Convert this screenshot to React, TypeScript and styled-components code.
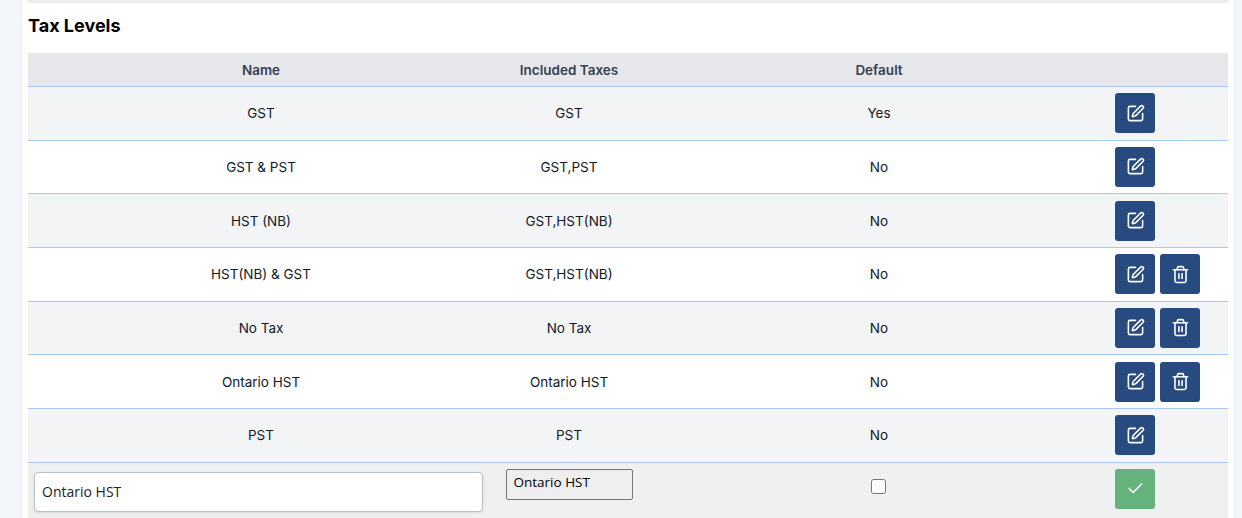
import React from 'react';
import styled, { createGlobalStyle } from 'styled-components';
import { Check, SquarePen, Trash2 } from 'lucide-react';

const rows = [
  { name: 'GST', taxes: 'GST', isDefault: 'Yes', canDelete: false },
  { name: 'GST & PST', taxes: 'GST,PST', isDefault: 'No', canDelete: false },
  { name: 'HST (NB)', taxes: 'GST,HST(NB)', isDefault: 'No', canDelete: false },
  { name: 'HST(NB) & GST', taxes: 'GST,HST(NB)', isDefault: 'No', canDelete: true },
  { name: 'No Tax', taxes: 'No Tax', isDefault: 'No', canDelete: true },
  { name: 'Ontario HST', taxes: 'Ontario HST', isDefault: 'No', canDelete: true },
  { name: 'PST', taxes: 'PST', isDefault: 'No', canDelete: false },
];

const App: React.FC<{}> = () => {
  return (
    <Page>
      <GlobalStyle />
      <Panel>
        <TopStrip />
        <Title>Tax Levels</Title>
        <Table>
          <colgroup>
            <col width="466" />
            <col width="150" />
            <col width="470" />
            <col width="114" />
          </colgroup>
          <thead>
            <tr>
              <HeadCell>Name</HeadCell>
              <HeadCell>Included Taxes</HeadCell>
              <HeadCell>Default</HeadCell>
              <HeadCell />
            </tr>
          </thead>
          <tbody>
            {rows.map((row) => (
              <Row key={row.name}>
                <Cell>{row.name}</Cell>
                <Cell>{row.taxes}</Cell>
                <Cell>{row.isDefault}</Cell>
                <ActionCell>
                  <Actions>
                    <IconButton>
                      <SquarePen size={19} strokeWidth={2} />
                    </IconButton>
                    {row.canDelete && (
                      <IconButton>
                        <Trash2 size={19} strokeWidth={2} />
                      </IconButton>
                    )}
                  </Actions>
                </ActionCell>
              </Row>
            ))}
            <EditRow>
              <NameEditCell>
                <NameInput defaultValue="Ontario HST" />
              </NameEditCell>
              <TaxesEditCell>
                <TaxesSelect>
                  <option>Ontario HST</option>
                </TaxesSelect>
              </TaxesEditCell>
              <DefaultEditCell>
                <DefaultCheckbox type="checkbox" />
              </DefaultEditCell>
              <SaveCell>
                <SaveButton>
                  <Check size={19} strokeWidth={2} />
                </SaveButton>
              </SaveCell>
            </EditRow>
          </tbody>
        </Table>
      </Panel>
    </Page>
  );
};

export default App;

const GlobalStyle = createGlobalStyle`
  html, body {
    margin: 0;
    padding: 0;
    height: 518px;
    overflow: hidden;
    background: #f3f7fb;
  }
`;

const Page = styled.div`
  height: 518px;
  padding: 0 8px 0 22px;
  overflow: hidden;
  font-family: Inter, 'Liberation Sans', sans-serif;
  color: #111827;
`;

const Panel = styled.div`
  background: #fff;
  padding: 0 6px;
  height: 518px;
  box-shadow: 0 0 4px rgba(0, 0, 0, 0.05);
`;

const TopStrip = styled.div`
  height: 3px;
  background: #ececec;
`;

const Title = styled.h2`
  margin: 0;
  height: 50px;
  padding-top: 11px;
  box-sizing: border-box;
  font-size: 18px;
  line-height: 24px;
  font-weight: 700;
  color: #000;
`;

const Table = styled.table`
  width: 1200px;
  table-layout: fixed;
  border-collapse: separate;
  border-spacing: 0;
  font-size: 13.5px;
`;

const HeadCell = styled.th`
  height: 33px;
  padding: 0;
  background: #e5e7eb;
  border-bottom: 1px solid #a9c8f5;
  font-size: 13.5px;
  font-weight: 600;
  color: #374151;
  text-align: center;
`;

const Row = styled.tr`
  background: #fff;
  &:nth-child(odd) {
    background: #f3f4f6;
  }
`;

const Cell = styled.td`
  height: 53.67px;
  box-sizing: border-box;
  padding: 0;
  border-bottom: 1px solid #a9c8f5;
  text-align: center;
  vertical-align: middle;
  font-weight: 400;
`;

const ActionCell = styled(Cell)`
  padding-left: 1px;
  text-align: left;
`;

const Actions = styled.div`
  display: flex;
  gap: 5px;
`;

const IconButton = styled.button`
  display: flex;
  align-items: center;
  justify-content: center;
  width: 40px;
  height: 40px;
  padding: 0;
  border: 0;
  border-radius: 3px;
  background: #274b80;
  color: #fff;
`;

const SaveButton = styled(IconButton)`
  background: #65b37c;
`;

const EditRow = styled.tr`
  background: #f0f0f0;
`;

const EditCell = styled.td`
  height: 56px;
  box-sizing: border-box;
  padding: 0;
  vertical-align: top;
`;

const NameEditCell = styled(EditCell)`
  padding: 9px 0 0 6px;
`;

const TaxesEditCell = styled(EditCell)`
  padding-top: 6px;
  text-align: center;
`;

const DefaultEditCell = styled(EditCell)`
  padding-top: 16px;
  text-align: center;
`;

const SaveCell = styled(EditCell)`
  padding: 6px 0 0 1px;
`;

const NameInput = styled.input`
  display: block;
  width: 449px;
  height: 40px;
  box-sizing: border-box;
  padding: 0 7px;
  border: 1px solid #b4bfca;
  border-radius: 4px;
  background: #fff;
  box-shadow: 0 1px 3px rgba(0, 0, 0, 0.1);
  font-family: 'Open Sans', sans-serif;
  font-size: 14px;
  color: #222;
`;

const TaxesSelect = styled.select`
  display: block;
  width: 127px;
  height: 31px;
  margin: 0 auto;
  padding: 0 7px 4px;
  box-sizing: border-box;
  appearance: none;
  border: 1px solid #767676;
  border-radius: 2px;
  background: #efefef;
  font-family: 'Open Sans', sans-serif;
  font-size: 13.5px;
  color: #000;
`;

const DefaultCheckbox = styled.input`
  display: block;
  width: 15px;
  height: 15px;
  margin: 0 auto 0 227px;
  accent-color: #274b80;
`;
